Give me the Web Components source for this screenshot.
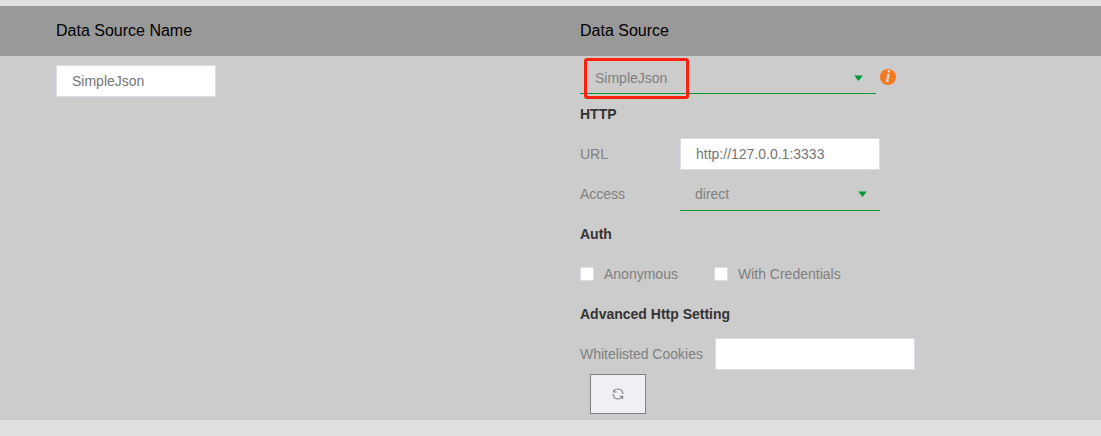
<!DOCTYPE html>
<html lang="en">
<head>
<meta charset="utf-8">
<title>Data Source</title>
<style>
html, body { margin: 0; height: 100%; background: #e0e0e0; overflow: hidden; }
body { font: 14px/20px "Liberation Sans", Arial, sans-serif; color: #808080; }
</style>
</head>
<body>
<source-page></source-page>
<script>
const define = (name, html) => customElements.define(name, class extends HTMLElement {
  constructor() {
    super();
    const t = document.createElement('template');
    t.innerHTML = html;
    this.attachShadow({ mode: 'open' }).append(t.content.cloneNode(true));
  }
});

define('text-field', `
<style>
:host { display: flex; align-items: center; box-sizing: border-box; width: var(--w, 200px); height: 32px; padding: 0 15px; background: #fff; border: 1px solid #dcdce6; color: #757575; }
</style><slot></slot>`);

define('select-field', `
<style>
:host { display: flex; align-items: center; justify-content: space-between; box-sizing: border-box; position: relative; width: var(--w, 200px); height: 33px; padding: var(--drop, 0) 13px 0 15px; border-bottom: 1px solid #009933; }
svg { display: block; }
</style><slot></slot><svg width="9" height="6" viewBox="0 0 9 6"><path d="M0.2 .5H8.8L4.5 5.9Z" fill="#009933"/></svg>`);

define('highlight-frame', `
<style>
:host { position: absolute; left: 4px; top: -3px; width: 105px; height: 41px; box-sizing: border-box; border: 3px solid #ff2010; border-radius: 3px; }
</style>`);

define('info-badge', `
<style>
:host { display: block; width: 16px; height: 16px; }
div { height: 16px; border-radius: 50%; background: #f57a1f; color: #ddd; font: italic bold 16px/15px "Liberation Serif", serif; text-align: center; }
</style><div>i</div>`);

define('check-option', `
<style>
:host { display: flex; align-items: center; gap: 10px; }
i { box-sizing: border-box; width: 14px; height: 14px; background: #fff; border: 1px solid #dcdce6; border-radius: 1px; }
</style><i></i><span><slot></slot></span>`);

define('form-row', `
<style>
:host { display: flex; align-items: center; height: 40px; }
span { box-sizing: border-box; width: var(--label, 100px); }
</style><span><slot name="label"></slot></span><slot></slot>`);

define('section-title', `
<style>
:host { display: block; height: 40px; line-height: 40px; font-weight: bold; color: #333; }
</style><slot></slot>`);

define('refresh-button', `
<style>
:host { display: flex; align-items: center; justify-content: center; box-sizing: border-box; width: 56px; height: 40px; margin-left: 10px; background: #f0eff5; border: 1px solid #808080; }
</style><svg width="12" height="12" viewBox="0 0 12 12" fill="none" stroke="#808080" stroke-width="1.1"><path d="M2.2 2.6C4.2 .2 10.6 .1 10.9 6M9.8 9.4C7.8 11.8 1.4 11.9 1.1 6"/><path d="M1 1V4.4H4.6V3.6H2.6ZM11.2 11.2V7.8H7.6L8.6 9Z" fill="#808080" stroke="none"/></svg>`);

define('table-header', `
<style>
:host { display: grid; grid-template-columns: 524px 1fr; align-items: center; height: 50px; padding-left: 56px; background: #999; color: #000; font-size: 16px; }
</style><slot></slot>`);

define('source-page', `
<style>
:host { display: block; padding-top: 6px; }
main { display: grid; grid-template-columns: 524px 1fr; height: 364px; padding-left: 56px; box-sizing: border-box; background: #ccc; }
.name { padding-top: 9px; --w: 160px; }
.source { display: flex; gap: 4px; padding-top: 5px; height: 33px; --w: 296px; --drop: 2px; }
info-badge { margin-top: 8px; }
.checks { display: flex; align-items: center; gap: 36px; height: 40px; }
</style>
<table-header><span>Data Source Name</span><span>Data Source</span></table-header>
<main>
  <div class="name"><text-field>SimpleJson</text-field></div>
  <div>
    <div class="source"><select-field id="kind">SimpleJson</select-field><info-badge></info-badge></div>
    <section-title>HTTP</section-title>
    <form-row><span slot="label">URL</span><text-field>http://127.0.0.1:3333</text-field></form-row>
    <form-row><span slot="label">Access</span><select-field>direct</select-field></form-row>
    <section-title>Auth</section-title>
    <div class="checks"><check-option>Anonymous</check-option><check-option>With Credentials</check-option></div>
    <section-title>Advanced Http Setting</section-title>
    <form-row style="--label:135px"><span slot="label">Whitelisted Cookies</span><text-field></text-field></form-row>
    <refresh-button></refresh-button>
  </div>
</main>`);

const page = document.querySelector('source-page').shadowRoot;
page.querySelector('#kind').shadowRoot.append(document.createElement('highlight-frame'));
</script>
</body>
</html>
